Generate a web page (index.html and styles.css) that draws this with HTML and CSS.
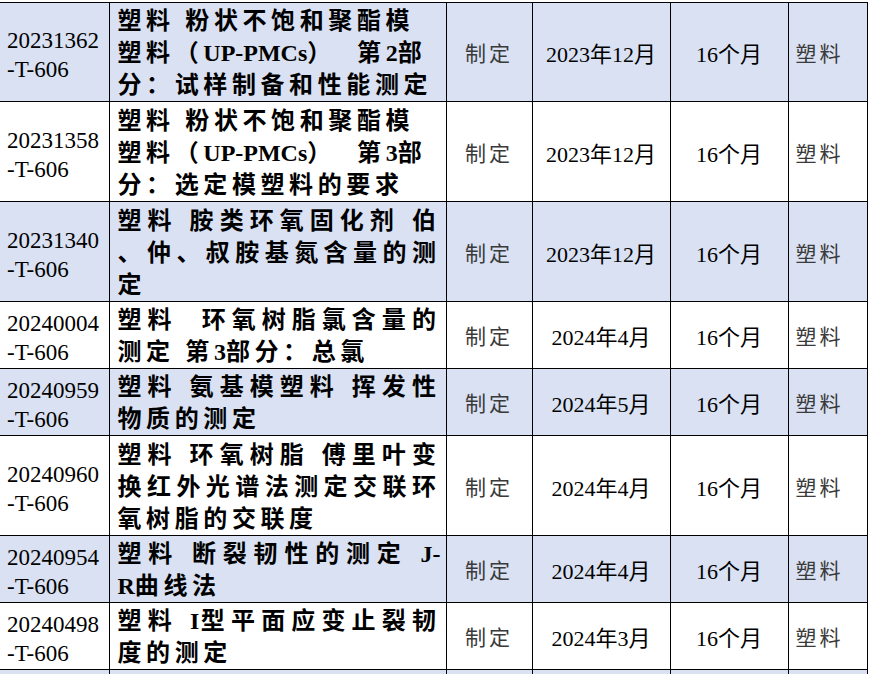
FILE: index.html
```html
<!DOCTYPE html>
<html lang="zh-CN">
<head>
<meta charset="utf-8">
<title>标准计划表</title>
<link rel="stylesheet" href="styles.css">
</head>
<body>
<div class="page">
<table class="plan">
  <colgroup>
    <col class="c-code"><col class="c-title"><col class="c-type"><col class="c-date"><col class="c-dur"><col class="c-cat">
  </colgroup>
  <tbody>
    <tr class="shade h3a">
      <td class="code">20231362<br>-T-606</td>
      <td class="title"><span class="ln">塑料 粉状不饱和聚酯模</span><span class="ln">塑料（<span class="lat">UP-PMCs</span>）&nbsp; 第<span class="lat">2</span>部</span><span class="ln">分：试样制备和性能测定</span></td>
      <td class="type">制定</td>
      <td class="date">2023年12月</td>
      <td class="dur">16个月</td>
      <td class="cat">塑料</td>
    </tr>
    <tr class="h3">
      <td class="code">20231358<br>-T-606</td>
      <td class="title"><span class="ln">塑料 粉状不饱和聚酯模</span><span class="ln">塑料（<span class="lat">UP-PMCs</span>）&nbsp; 第<span class="lat">3</span>部</span><span class="ln">分：选定模塑料的要求</span></td>
      <td class="type">制定</td>
      <td class="date">2023年12月</td>
      <td class="dur">16个月</td>
      <td class="cat">塑料</td>
    </tr>
    <tr class="shade h3">
      <td class="code">20231340<br>-T-606</td>
      <td class="title"><span class="ln just">塑料 胺类环氧固化剂 伯</span><span class="ln just">、仲、叔胺基氮含量的测</span><span class="ln">定</span></td>
      <td class="type">制定</td>
      <td class="date">2023年12月</td>
      <td class="dur">16个月</td>
      <td class="cat">塑料</td>
    </tr>
    <tr class="h2">
      <td class="code">20240004<br>-T-606</td>
      <td class="title"><span class="ln just">塑料&nbsp; 环氧树脂氯含量的</span><span class="ln">测定 第<span class="lat">3</span>部分：总氯</span></td>
      <td class="type">制定</td>
      <td class="date">2024年4月</td>
      <td class="dur">16个月</td>
      <td class="cat">塑料</td>
    </tr>
    <tr class="shade h2">
      <td class="code">20240959<br>-T-606</td>
      <td class="title"><span class="ln just">塑料 氨基模塑料 挥发性</span><span class="ln">物质的测定</span></td>
      <td class="type">制定</td>
      <td class="date">2024年5月</td>
      <td class="dur">16个月</td>
      <td class="cat">塑料</td>
    </tr>
    <tr class="h3">
      <td class="code">20240960<br>-T-606</td>
      <td class="title"><span class="ln just">塑料 环氧树脂 傅里叶变</span><span class="ln just">换红外光谱法测定交联环</span><span class="ln">氧树脂的交联度</span></td>
      <td class="type">制定</td>
      <td class="date">2024年4月</td>
      <td class="dur">16个月</td>
      <td class="cat">塑料</td>
    </tr>
    <tr class="shade h2">
      <td class="code">20240954<br>-T-606</td>
      <td class="title"><span class="ln just">塑料 断裂韧性的测定 <span class="lat">J-</span></span><span class="ln"><span class="lat">R</span>曲线法</span></td>
      <td class="type">制定</td>
      <td class="date">2024年4月</td>
      <td class="dur">16个月</td>
      <td class="cat">塑料</td>
    </tr>
    <tr class="h2">
      <td class="code">20240498<br>-T-606</td>
      <td class="title"><span class="ln just">塑料 <span class="lat">I</span>型平面应变止裂韧</span><span class="ln">度的测定</span></td>
      <td class="type">制定</td>
      <td class="date">2024年3月</td>
      <td class="dur">16个月</td>
      <td class="cat">塑料</td>
    </tr>
    <tr class="shade tail">
      <td class="code"></td>
      <td class="title"></td>
      <td class="type"></td>
      <td class="date"></td>
      <td class="dur"></td>
      <td class="cat"></td>
    </tr>
  </tbody>
</table>
</div>
</body>
</html>
```
FILE: styles.css
```css
html, body {
  margin: 0;
  padding: 0;
  background: #ffffff;
}
body {
  width: 870px;
  height: 674px;
  overflow: hidden;
  font-family: "Liberation Serif", "Noto Sans CJK SC", serif;
  color: #000;
}
.page {
  padding-top: 2px;
}
.plan {
  border-collapse: collapse;
  table-layout: fixed;
  width: 867px;
}
.c-code { width: 109px; }
.c-title { width: 337px; }
.c-type { width: 86px; }
.c-date { width: 138px; }
.c-dur { width: 118px; }
.c-cat { width: 79px; }

.plan td {
  border: 1px solid #000;
  padding: 0;
  vertical-align: middle;
  white-space: nowrap;
  overflow: hidden;
}
.plan td.code {
  border-left: none;
}
.shade td {
  background: #d9e1f2;
}
.h3a { height: 99px; }
.h3 { height: 100px; }
.h2 { height: 67px; }
.tail { height: 3px; }
.tail td { border-bottom: none; }

.code {
  padding-left: 7px !important;
  font-size: 23px;
  line-height: 29px;
  padding-top: 6px !important;
}
.title {
  padding: 2px 5px 0 8px !important;
  font-size: 24px;
  line-height: 32px;
  font-weight: bold;
  letter-spacing: 4.6px;
}
.title .ln {
  display: block;
}
.title .ln.just {
  text-align: justify;
  text-align-last: justify;
}
.title .lat {
  letter-spacing: 0;
}
.type {
  text-align: center;
  font-size: 21px;
  letter-spacing: 3px;
  color: #3a3a3a;
}
.date {
  text-align: center;
  font-size: 22px;
}
.dur {
  text-align: center;
  font-size: 22px;
}
.cat {
  padding-left: 7px !important;
  font-size: 21px;
  letter-spacing: 3px;
  color: #3a3a3a;
}
```
